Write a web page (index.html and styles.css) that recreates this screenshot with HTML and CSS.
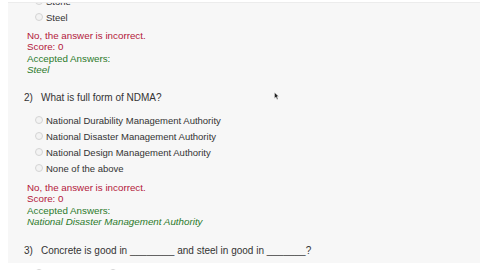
FILE: index.html
```html
<!DOCTYPE html>
<html>
<head>
<meta charset="utf-8">
<link rel="stylesheet" href="styles.css">
</head>
<body>
<div class="page">
  <div class="panel">
    <div class="options first">
      <div class="opt"><span class="radio"></span><span>Stone</span></div>
      <div class="opt"><span class="radio"></span><span>Steel</span></div>
    </div>
    <div class="feedback">
      <div class="wrong">No, the answer is incorrect.</div>
      <div class="wrong">Score: 0</div>
      <div class="acc">Accepted Answers:</div>
      <div class="acc ans">Steel</div>
    </div>
    <div class="question"><span class="num">2)</span><span>What is full form of NDMA?</span>
      <svg class="cursor" width="5" height="8" viewBox="0 0 5 8"><path d="M0.5 0.5 L0.5 6.5 L2 5 L3 7.5 L4 7 L3 4.5 L4.8 4.5 Z" fill="#222" stroke="#fff" stroke-width="0.4"/></svg>
    </div>
    <div class="options">
      <div class="opt"><span class="radio"></span><span>National Durability Management Authority</span></div>
      <div class="opt"><span class="radio"></span><span>National Disaster Management Authority</span></div>
      <div class="opt"><span class="radio"></span><span>National Design Management Authority</span></div>
      <div class="opt"><span class="radio"></span><span>None of the above</span></div>
    </div>
    <div class="feedback second">
      <div class="wrong">No, the answer is incorrect.</div>
      <div class="wrong">Score: 0</div>
      <div class="acc">Accepted Answers:</div>
      <div class="acc ans">National Disaster Management Authority</div>
    </div>
    <div class="question q3"><span class="num">3)</span><span>Concrete is good in ________ and steel in good in _______?</span></div>
  </div>
  <div class="below">
    <div class="opt"><span class="radio"></span><span>Tension</span></div>
    <div class="opt"><span class="radio"></span><span>Compression</span></div>
  </div>
</div>
</body>
</html>
```
FILE: styles.css
```css
html, body { margin: 0; padding: 0; background: #ffffff; }
body { font-family: "Liberation Sans", Arial, sans-serif; font-size: 10px; color: #333; width: 480px; height: 270px; overflow: hidden; }
.page { padding-top: 2px; }
.panel { background: #f7f7f7; margin-left: 8px; border-top: 1px solid #ececec; height: 261px; padding-left: 16px; box-sizing: border-box; overflow: hidden; }
.options { padding-left: 11px; font-size: 9.5px; }
.options.first { margin-top: -10px; }
.opt { display: flex; align-items: center; height: 16px; }
.radio { width: 8px; height: 8px; border: 1px solid #d4d4d4; border-radius: 50%; background: #f3f3f3; margin-right: 3px; box-sizing: border-box; }
.feedback { margin-top: 5px; padding-left: 3px; font-size: 9.8px; }
.feedback.second { margin-top: 6px; }
.wrong { color: #b3173a; line-height: 11px; }
.acc { color: #2b7a2b; line-height: 11px; }
.wrong + .acc { margin-top: 1px; }
.ans { font-style: italic; }
.question { display: flex; margin-top: 17px; margin-bottom: 8px; line-height: 12px; position: relative; }
.num { width: 17px; }
.cursor { position: absolute; left: 250px; top: 0px; }
.q3 { margin-top: 18px; }
.below { padding-left: 35px; display: flex; gap: 30px; font-size: 9.5px; margin-top: 2px; }
```
